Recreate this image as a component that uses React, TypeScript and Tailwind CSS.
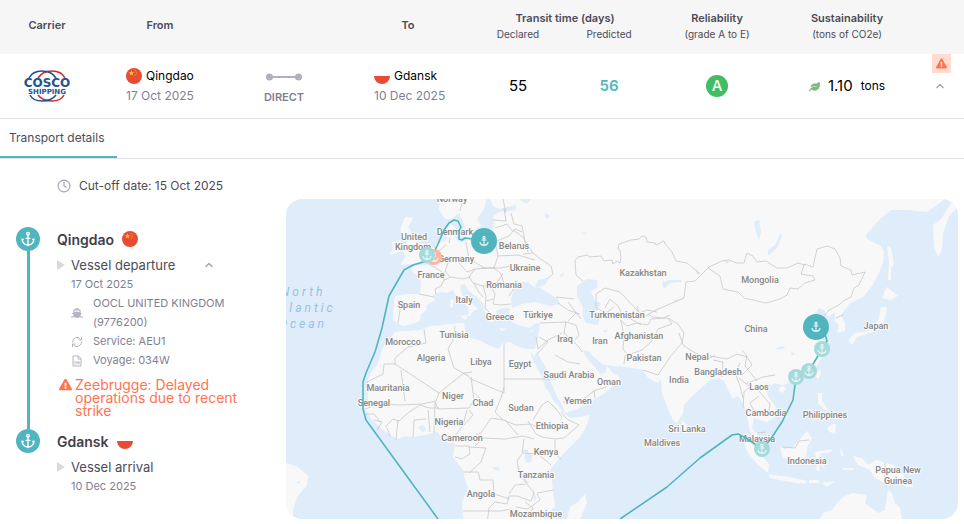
import React from "react";
import { Anchor, ChevronUp, Clock4, RefreshCw } from "lucide-react";
import { FaExclamationTriangle, FaLeaf, FaShip } from "react-icons/fa";

const LAND = [
  // Europe, Asia and Africa
  "M450 223 L447 230 447 240 440 243 434 246 428 254 427 265 420 265 413 267 412 272 420 277 421 284 420 294 407 294 395 296 394 305 393 320 397 323 403 326 413 324 420 321 421 315 426 310 427 305 435 300 433 295 440 292 447 293 453 290 457 297 463 302 468 307 469 313 467 316 470 316 474 310 478 309 471 303 463 297 460 289 461 285 465 284 468 290 477 297 483 303 484 310 487 317 491 323 494 321 497 316 496 311 502 308 510 308 509 313 512 322 518 325 530 328 534 324 540 323 538 337 535 349 526 349 517 346 510 342 502 343 499 349 490 346 481 341 468 337 465 331 464 323 457 323 443 325 430 326 420 330 409 331 402 331 395 332 391 339 383 347 381 354 377 365 371 373 367 382 368 400 363 405 370 417 383 430 397 439 405 436 413 437 425 435 437 432 441 436 448 443 455 443 453 457 463 470 465 480 468 487 462 503 463 520 543 520 545 514 555 507 553 490 550 470 560 457 570 447 580 437 586 427 590 415 580 417 570 418 563 412 558 405 553 400 549 392 545 387 542 376 538 370 532 358 531 352 534 357 537 352 541 360 546 367 550 378 554 390 559 400 563 407 565 413 577 409 593 400 605 393 614 385 620 377 613 373 607 366 605 373 600 374 594 366 588 360 582 350 588 351 594 357 602 364 612 366 627 367 643 370 648 378 657 383 661 380 662 393 667 407 673 420 677 423 683 413 684 405 690 398 700 389 710 380 718 378 724 381 729 392 733 399 738 396 744 405 747 416 750 431 757 442 765 449 769 449 765 440 757 434 752 428 754 418 760 420 767 422 777 415 775 405 768 397 766 389 774 383 783 385 793 381 804 378 813 372 819 362 826 348 822 338 818 331 826 325 821 320 814 315 819 308 824 310 828 317 835 312 835 321 839 325 837 333 845 331 845 323 841 315 850 303 863 297 872 286 878 275 883 263 884 252 881 246 867 239 866 235 880 219 891 210 907 210 927 212 940 203 945 198 490 198 493 206 499 209 516 205 516 210 499 212 493 216 494 227 485 239 477 242 467 240 461 243 456 239 453 234 458 231Z",
  // Scandinavia
  "M440 198 L439 209 445 219 451 219 459 213 464 224 467 238 473 237 475 230 481 226 477 219 484 209 487 198Z",
  "M405 217 L413 218 408 227 417 240 427 250 424 260 412 264 400 265 406 256 402 250 408 241 400 230Z",
  "M392 242 L400 240 402 245 400 252 390 255 393 248Z",
  "M585 494 L587 503 580 519 567 519 570 507 578 502Z",
  "M286 463 L298 467 308 476 307 485 297 497 293 510 293 519 286 519Z",
  // South-east Asian islands
  "M741 436 L750 442 757 450 763 457 769 464 768 473 757 464 748 453Z",
  "M768 474 L780 476 790 477 807 481 805 484 790 482 770 478Z",
  "M780 447 L785 449 793 447 800 439 807 431 812 438 807 447 806 457 797 461 789 459 783 458Z",
  "M815 452 L832 449 831 452 819 454 826 460 822 462 825 469 820 464 819 471 816 470 817 460Z",
  "M818 393 L822 393 822 400 826 407 830 412 824 409 818 403Z",
  "M827 428 L833 424 836 424 835 434 830 432Z M811 424l8-10-6 9z M824 414l5 2-2 5z",
  "M853 456 L862 458 868 465 876 460 893 465 903 474 905 480 915 487 907 487 894 481 884 483 875 478 870 470 858 465Z M905 473l10-4-4 6z",
  "M820 519 L823 513 832 510 838 502 843 497 852 493 867 495 865 503 878 513 885 510 888 490 892 493 895 503 900 508 902 519Z",
  "M809 480h9l2 3h-11z M821 483l14-2-8 6z M840 448l3 5 2 4-4-2z M843 468h11v2h-11z",
  // Japan, Sakhalin and Kamchatka
  "M848 340 L855 333 868 331 873 328 879 318 881 307 887 307 886 314 883 323 873 332 857 337 852 345Z",
  "M882 298 L887 287 892 291 898 296 890 300Z",
  "M887 246 L891 248 894 264 891 269 891 280 888 280 889 262Z",
  "M954 199 L958 207 949 216 943 233 942 250 938 257 934 247 933 225 941 219 948 208Z",
  "M820 369 L821 373 818 379 815 375Z M779 388l4-2 3 2-3 5-4-2z M682 420l5 5-1 5-4-2z",
  "M451 299l3 1-1 7-3 1z M460 316l8-1-2 5z M499 328l9 1-6 2z M529 331l6-2-4 3z",
];

const WATER = [
  "M514 288 L521 282 528 282 534 287 540 288 545 291 558 299 560 304 550 306 535 302 522 304 512 308 511 300Z",
  "M535 286 L538 280 548 278 546 284 538 288Z",
  "M577 286 L587 279 597 280 598 287 591 291 595 301 601 303 596 312 600 318 598 325 586 323 582 315 583 307 577 296Z",
  "M662 282l8-2h12l-1 2-11 1-5 5-2-1z M768 250 l7-5 6-12 1 3-5 12-9 8z M754 222l5-2 2 12-2 8-3-8z",
  "M520 198h12l-5 6-6-3z M545 213l5 2-2 4-3-3z M581 233l6-1-2 3z M560 275l5-3-4 6z",
  "M526 452l6 2v7l-5 2-3-5z M519 467l4 9 6 7-2 1-8-9z M533 487l3 11-2 4z M418 427l6-2 2 6-4 1z",
  "M492 467l6 0 3 4-6-1z M296 482l5-1-2 3z M673 300l8-1-6 3z M695 268l5 5-3 2z M724 261l6 0-3 3z M603 330l5 0-3 3z M776 348l8-2 1 2-8 2z M791 352l4 1-3 3z",
];

const BORDERS = [
  // Europe
  "M463 199l-3 12M425 262l9 5 8 5 2 8-3 6-6 3 1 5M419 294l15 3M398 300l2 10-2 13M434 246l4 6-3 9M438 252l8-7M444 280l7-3 12 2 7-2M449 243l1-5M450 277l-5-6 3-8M466 242l3 17-10 4 8 9 8-3 11-1M469 259l14 8M483 240l12 1 3 15-4 12-13 0M495 228l12-4 6 8M493 220l13 1-2-13M497 241l12-5 6-7 7 3M498 256l20-1 17 5M513 230l11 8 4 14M475 269l-6 8 4 6 10 3 12-1 8-11M483 268l18 0 9-2M474 283l4 8 5 6M483 286l3 10-1 12 4 4M490 285l5 9-2 10 7 1 11-1M486 301l7-2M493 267l8 7 3 9 10 5M514 288l-5 8M503 199l3 14",
  // Russia and Central Asia
  "M523 254l10-1 6 5 12 8 2 8-6 5M511 213l3 11 8 2 3 15 8 12M583 281l-7-6-1-14 3-4 9-2 3 2 11-1 3 5 8-1 1 4 4-3 3 2 1-5-1-8-2-1 1-5 12-4 8-1 3-3 4 1 1 5 8 1 1 2 8-4 1 3 7 8 4 9 11 2 13 11M709 267l-14 14-9 1-2 16-28 12-14 8-5-8-17-18-15-4-9 6v14l10 5 8-6M709 267l13-6 7-1 8 3 7 0 3-10 6 3 4 6 9-1 11 7 10 0 11-5 7 2M708 268l12 8 3 13 15 3 6 6 22 5M605 308l5-9 8 7 4 8 9 5 10 6M637 306l2 7 8-3 10 2M648 314l5 3 10 1 7-3",
  "M766 303l14-4 7-4 3-7 8 1 7-6 10-3-2-4-12-2 3-9M804 264l9 3 2-9 2-9 10-3 8 3 5 9 1 8 10 4 1 5 13-3-6 13-5 3-3 9-8 4-4 4-10 5-6 7M836 318l7-3",
  // Middle East
  "M556 297l18 2M558 303l10 7 12 4M568 302l6 8 7 9M540 323l26-1 10 3 3 10-4 5M566 322l-2 11 15 14 3 5M562 333l-14 7-10 9-2-12M539 337l9 5-11 12M555 355l13 7 12 2M563 402l19-2 12-9 1 7M593 391l13-4 2-7M576 313l-8 8",
  // South and Central Asia
  "M620 320l7 6 10-3 11 2 3-6 17-1 4 6-14 5-6 12-10 9-17 6-1 8M668 318l10 6 6 9-2 10-12 14-12 18-15-5M621 320l3 16-1 13 5 6M679 333l4 12 12 8 15 5 5-3M710 356l17 3 10-5 10 3 5 8-9 9-7 1M713 360l10 2-1 15M740 363l-5 10 5 13 3 12M739 378l11 9-6 5-1 16M742 350l5 6-2 10 12 15M770 385l-12 5 12 14-1 8-14 1-5-10 9-7M745 384l18-7 12-2M758 433l8-1",
  // North and West Africa
  "M424 329l2 14-18 4-13 11v6l44 29 25-20 8-1M455 326l-2 14-5 9 6 19 15 8M395 364h-11l-1 10-16 8v5M401 370l4 31M439 393l-3 8-14 3-23 1-20-1-16-1M464 373l7 6 33 14V343M504 379h52M504 387l-3 11-6 14 8 8M471 377l3 23-5 8-31 1-3-7M435 402l-1 31M439 408l-10 0-9-3-12 8-9 8-6-2-8 8M428 410l2 22M413 437l1-17 12-1M396 440l2-20M364 414h10l6 8M365 409l12-4M374 420l8 2-5 8M387 428l3 8M474 393l7 6M467 410l-4 15-11 15M469 410l4 5-10 11",
  // Central, East and Southern Africa
  "M463 440l18-7 10-15 12 2 13 5 15-1 7 4M455 446h14l1 8-8 5-7-2M469 447l17 1-5 14-12 11M475 446l8-8 22 1 18-3 11 3M505 420l13 15M533 420l9-15 6-4 8 8 6 8M528 421l8 13 6 3 13 2 9-1 15-13-12-6-6-7M555 440l0 14 6 5M524 439l-2 14 16 1 13 11M522 454l-5 7 2 11 8 12 7 9-3 8-14-5-8 0-2 8-12-2-6 6-2 16M463 472h15l2 8h13l1 14 16 5M463 511h38l10-2M516 507l12 2 12-9-3-6M537 493l17-3M525 484l-10 1-6 9M528 451h-5M525 502l8 6-3 7",
  // Borneo and New Guinea
  "M783 447l12 1 4-7 10-1M885 463v20",
];

const LABELS: [string, number, number][] = [
  ["Norway", 452, 202], ["Denmark", 455, 235], ["United", 414, 240], ["Kingdom", 413, 250],
  ["Germany", 456, 262], ["France", 431, 278], ["Belarus", 514, 249], ["Ukraine", 525, 271],
  ["Romania", 504, 288], ["Spain", 409, 308], ["Italy", 464, 303], ["Greece", 500, 320],
  ["Türkiye", 538, 318], ["Tunisia", 454, 338], ["Morocco", 403, 345], ["Algeria", 431, 361],
  ["Libya", 481, 365], ["Egypt", 520, 367], ["Iraq", 565, 342], ["Iran", 600, 344],
  ["Kazakhstan", 643, 276], ["Turkmenistan", 617, 318], ["Afghanistan", 639, 339],
  ["Pakistan", 644, 361], ["Mongolia", 760, 283], ["China", 756, 332], ["Japan", 876, 329],
  ["Nepal", 697, 360], ["Bangladesh", 718, 375], ["India", 679, 383], ["Laos", 759, 390],
  ["Saudi Arabia", 569, 378], ["Oman", 609, 385], ["Yemen", 578, 404], ["Mauritania", 388, 391],
  ["Senegal", 374, 406], ["Niger", 453, 399], ["Chad", 483, 406], ["Sudan", 521, 411],
  ["Nigeria", 449, 425], ["Cameroon", 462, 441], ["Ethiopia", 552, 429], ["Kenya", 546, 455],
  ["Tanzania", 536, 478], ["Angola", 481, 497], ["Mozambique", 536, 517], ["Sri Lanka", 687, 432],
  ["Maldives", 662, 446], ["Cambodia", 766, 416], ["Philippines", 825, 418],
  ["Malaysia", 757, 442], ["Indonesia", 807, 464], ["Papua New", 898, 473], ["Guinea", 898, 484],
];

const STOPS: [number, number, number, string][] = [
  [434, 257, 8, "#ffb49f"],
  [427, 255, 8, "#a5dadd"],
  [484, 241, 13, "#51b5bf"],
  [822, 349, 8, "#a5dadd"],
  [816, 327, 13, "#51b5bf"],
  [809, 371, 8, "#a5dadd"],
  [796, 377, 8, "#a5dadd"],
  [762, 449, 8, "#a5dadd"],
];

function RouteMap() {
  return (
    <svg
      role="img"
      aria-label="Vessel route from Qingdao to Gdansk"
      viewBox="286 199 672 320"
      preserveAspectRatio="xMidYMid slice"
      className="block h-full w-full bg-[#dfedfb]"
    >
      <g fill="#f8f8f8">
        {LAND.map((d) => <path key={d} d={d} />)}
      </g>
      <g fill="#dfedfb">
        {WATER.map((d) => <path key={d} d={d} />)}
      </g>
      <g fill="none" stroke="#c8c8c8" strokeWidth="0.8" strokeLinejoin="round">
        {BORDERS.map((d) => <path key={d} d={d} />)}
      </g>
      <g className="text-[9px] font-medium" fontFamily="Roboto, sans-serif" fill="#858585" stroke="#fafafa" strokeWidth="2" strokeLinejoin="round" paintOrder="stroke" textAnchor="middle">
        {LABELS.map(([name, x, y]) => <text key={name} x={x} y={y}>{name}</text>)}
      </g>
      <g className="text-[12px] italic tracking-[3px]" fontFamily="Roboto, sans-serif" fill="#98bfe6">
        <text x="281" y="296">North</text>
        <text x="272" y="312">Atlantic</text>
        <text x="279" y="328">Ocean</text>
      </g>
      <g fill="none" stroke="#51b5bf" strokeWidth="1.6" strokeLinejoin="round">
        <path d="M484 241 L473 239 465 238 462 240 459 239 459 231 461 227 458 221 454 220 449 223 444 230 438 244 433 254 427 261 413 265 404 270 389 296 382 328 375 352 366 373 363 382 363 409 366 420 438 519" />
        <path d="M620 519 L667 487 700 458 732 435 738 434 746 438 762 449 770 440 782 422 793 400 796 377 809 371 822 349 827 341 825 334 816 327" />
      </g>
      {STOPS.map(([x, y, r, color]) => (
        <g key={`${x}-${y}`}>
          <circle cx={x} cy={y} r={r} fill={color} />
          <g transform={`translate(${x} ${y})`} fill="none" stroke="#e5f6f7" strokeWidth="1.1" strokeLinecap="round">
            <circle cy="-3.5" r="1.1" />
            <path d="M0-2.3V4M-2-1H2M-4 1.3C-3.6 3.4-2 4.2 0 4.4C2 4.2 3.6 3.4 4 1.3" />
          </g>
        </g>
      ))}
    </svg>
  );
}

function ChinaFlag() {
  return (
    <svg viewBox="0 0 16 16" className="size-4 shrink-0" role="img" aria-label="China">
      <circle cx="8" cy="8" r="8" fill="#ea4b35" />
      <path d="M5.5 2.3 6.3 4.2 8.2 4.3 6.7 5.5 7.2 7.4 5.5 6.3 3.8 7.4 4.3 5.5 2.8 4.3 4.7 4.2Z" fill="#f9cb38" />
      <g fill="#f0a030">
        <circle cx="9.2" cy="2.7" r=".6" /><circle cx="10.3" cy="4.1" r=".6" />
        <circle cx="10.3" cy="5.8" r=".6" /><circle cx="9.2" cy="7.2" r=".6" />
      </g>
    </svg>
  );
}

function PolandFlag() {
  return (
    <svg viewBox="0 0 16 16" className="size-4 shrink-0" role="img" aria-label="Poland">
      <path d="M0 8H16A8 8 0 0 1 0 8Z" fill="#ea4b35" />
    </svg>
  );
}

function CoscoLogo() {
  return (
    <svg viewBox="0 0 48 32" className="mx-auto block h-8 w-12" role="img" aria-label="COSCO Shipping">
      <g fill="none" strokeWidth="1.6">
        <g stroke="#cf2e3a">
          <path d="M15 8C18 3 24 1 29 1C35 1 40 4 42 8" />
          <path d="M15 25C18 29 24 31 29 31C35 31 39 29 41 25" />
        </g>
        <g stroke="#1d5594">
          <path d="M6 8C8 4 13 1 19 1C24 1 30 3 33 8" />
          <path d="M7 25C9 29 13 31 19 31C24 31 30 29 33 25" />
        </g>
      </g>
      <g fontFamily="'DejaVu Sans', sans-serif" fill="#1d5594" textAnchor="middle" className="font-bold">
        <text x="24" y="17" className="text-[12px]">COSCO</text>
        <text x="24" y="24" className="text-[7px]">SHIPPING</text>
      </g>
    </svg>
  );
}

function FileIcon() {
  return (
    <svg viewBox="0 0 12 12" className="size-3 shrink-0" fill="none" stroke="#b4b4c2" aria-hidden>
      <path d="M2 1H7.5L10 3.5V11H2ZM7 1V4H10" />
      <path d="M4 6V9.5M6 6V9.5M8 6V9.5M6 7.7H8" strokeWidth=".9" />
    </svg>
  );
}

function PortBadge() {
  return (
    <span className="z-10 flex size-6 shrink-0 items-center justify-center rounded-full bg-[#51b5bf] text-white">
      <Anchor className="size-4" strokeWidth={2} aria-hidden />
    </span>
  );
}

function Place({ flag, name, date }: { flag: React.ReactNode; name: string; date: string }) {
  return (
    <>
      <div className="flex items-center gap-1 leading-5 text-black">{flag}{name}</div>
      <div className="leading-5 text-[#7f7f94]">{date}</div>
    </>
  );
}

function Schedule() {
  return (
    <table className="w-full table-fixed border-collapse">
      <colgroup>
        <col className="w-[94px]" /><col className="w-[132px]" /><col className="w-[116px]" />
        <col className="w-[132px]" /><col className="w-[88px]" /><col className="w-[94px]" />
        <col className="w-[122px]" /><col className="w-[138px]" /><col className="w-[48px]" />
      </colgroup>
      <thead className="bg-[#f6f6f6] text-[11px] leading-4 text-[#4b4b57]">
        <tr className="h-[26px]">
          <th rowSpan={2} className="pb-1 font-semibold">Carrier</th>
          <th rowSpan={2} className="pb-1 font-semibold">From</th>
          <td rowSpan={2} />
          <th rowSpan={2} className="pb-1 font-semibold">To</th>
          <th colSpan={2} className="align-bottom font-semibold">Transit time (days)</th>
          <th className="align-bottom font-semibold">Reliability</th>
          <th className="align-bottom font-semibold">Sustainability</th>
          <td rowSpan={2} />
        </tr>
        <tr className="h-7 align-top text-[10px]">
          <th className="font-normal">Declared</th>
          <th className="font-normal">Predicted</th>
          <th className="font-normal">(grade A to E)</th>
          <th className="font-normal">(tons of CO2e)</th>
        </tr>
      </thead>
      <tbody className="text-[12px]">
        <tr className="h-16">
          <td><CoscoLogo /></td>
          <td className="pl-8"><Place flag={<ChinaFlag />} name="Qingdao" date="17 Oct 2025" /></td>
          <td className="text-center text-[11px] font-semibold text-[#7f7f94]">
            <svg viewBox="0 0 36 8" className="mx-auto mt-1.5 block h-2 w-9" aria-hidden>
              <path d="M4 4H32" stroke="#b0b0be" strokeWidth="2" />
              <circle cx="3.5" cy="4" r="3.5" fill="#b0b0be" /><circle cx="32.5" cy="4" r="3.5" fill="#b0b0be" />
            </svg>
            <span className="block pt-2 leading-4">DIRECT</span>
          </td>
          <td className="pl-8"><Place flag={<PolandFlag />} name="Gdansk" date="10 Dec 2025" /></td>
          <td className="text-center text-[15px] text-black">55</td>
          <td className="text-center text-[15px] font-semibold text-[#51b5bf]">56</td>
          <td>
            <span className="mx-auto flex size-[22px] items-center justify-center rounded-full bg-[#3fbe64] text-[15px] font-medium text-white">A</span>
          </td>
          <td>
            <div className="flex items-center justify-center text-black">
              <FaLeaf className="mr-2 size-[11px] text-[#7fb97f]" aria-hidden />
              <span className="mr-2 text-[15px]">1.10</span>tons
            </div>
          </td>
          <td className="relative">
            <span className="absolute right-[13px] top-0 flex size-[19px] items-center justify-center bg-[#ffdcd2] text-[#ff7450]">
              <FaExclamationTriangle className="size-[11px]" aria-label="Alert" />
            </span>
            <button type="button" aria-label="Collapse" className="mx-auto block w-full text-[#a5a5b5]">
              <ChevronUp className="mx-auto size-3" strokeWidth={3} />
            </button>
          </td>
        </tr>
      </tbody>
    </table>
  );
}

function Timeline() {
  return (
    <section className="w-[286px] shrink-0 pl-4 text-[11px] leading-[19px] text-[#7f7f94]">
      <p className="flex items-center gap-2 pl-[41px] pt-[17px] text-[12px] text-[#4b4b57]">
        <Clock4 className="size-[14px] text-[#a5a5b5]" strokeWidth={2} aria-hidden />
        Cut-off date: 15 Oct 2025
      </p>
      <ol className="pt-8">
        <li className="flex gap-[17px]">
          <div className="flex w-6 flex-col items-center">
            <PortBadge />
            <span className="w-[3px] grow bg-[#51b5bf]" />
          </div>
          <div className="h-[202px] min-w-0 grow">
            <h2 className="flex h-6 items-center gap-2 text-[14px] font-semibold text-[#3f3f4b]">Qingdao <ChinaFlag /></h2>
            <button type="button" aria-expanded="true" className="mt-1 flex h-5 w-[158px] items-center gap-[6px] text-[13px] text-[#4b4b57]">
              <svg viewBox="0 0 8 10" className="h-[10px] w-2" aria-hidden><path d="M0 0L8 5L0 10Z" fill="#d8d8df" /></svg>
              Vessel departure
              <ChevronUp className="ml-auto size-3 text-[#a5a5b5]" strokeWidth={3} aria-hidden />
            </button>
            <div className="pl-[14px]">
              <p>17 Oct 2025</p>
              <ul>
                <li className="flex items-center gap-[10px]">
                  <FaShip className="size-3 shrink-0 text-[#b4b4c2]" aria-hidden />
                  <span className="w-[150px]">OOCL UNITED KINGDOM (9776200)</span>
                </li>
                <li className="flex items-center gap-[10px]">
                  <RefreshCw className="size-3 shrink-0 text-[#b4b4c2]" strokeWidth={2} aria-hidden />Service: AEU1
                </li>
                <li className="flex items-center gap-[10px]">
                  <FileIcon />Voyage: 034W
                </li>
              </ul>
            </div>
            <p className="flex gap-[3px] pl-[2px] pt-2 text-[14px] leading-[13px] text-[#ff7450]">
              <FaExclamationTriangle className="size-[13px] shrink-0" aria-label="Alert" />
              <span className="w-[170px]">Zeebrugge: Delayed operations due to recent strike</span>
            </p>
          </div>
        </li>
        <li className="flex gap-[17px]">
          <PortBadge />
          <div>
            <h2 className="flex h-6 items-center gap-2 text-[14px] font-semibold text-[#3f3f4b]">Gdansk <PolandFlag /></h2>
            <p className="mt-1 flex h-5 items-center gap-[6px] text-[13px] text-[#4b4b57]">
              <svg viewBox="0 0 8 10" className="h-[10px] w-2" aria-hidden><path d="M0 0L8 5L0 10Z" fill="#d8d8df" /></svg>
              Vessel arrival
            </p>
            <p className="pl-[14px]">10 Dec 2025</p>
          </div>
        </li>
      </ol>
    </section>
  );
}

export default function App() {
  return (
    <main className="bg-white font-['Inter',sans-serif]">
      <Schedule />
      <div role="tablist" className="flex h-[41px] border-y border-[#e2e2e9]">
        <button type="button" role="tab" aria-selected="true" className="w-[117px] border-b-2 border-[#51b5bf] pl-[9px] text-left text-[12px] text-[#4b4b57]">Transport details</button>
      </div>
      <div className="flex">
        <Timeline />
        <div className="mr-[6px] mt-10 h-80 grow overflow-hidden rounded-2xl"><RouteMap /></div>
      </div>
    </main>
  );
}
